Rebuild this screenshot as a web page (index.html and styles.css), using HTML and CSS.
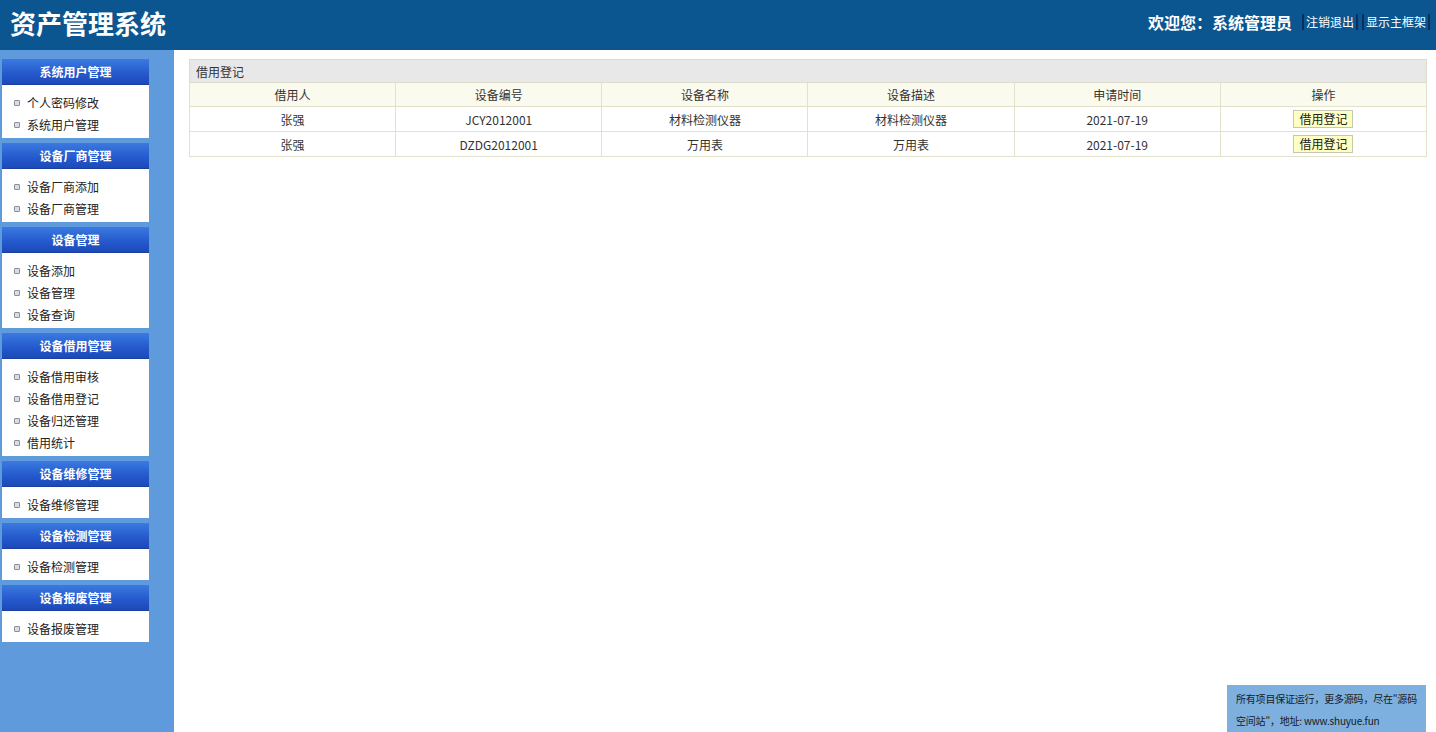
FILE: index.html
```html
<!DOCTYPE html>
<html lang="zh-CN">
<head>
  <meta charset="UTF-8" />
  <title>资产管理系统</title>
  <link rel="stylesheet" href="styles.css">
</head>
<body>
  <div class="top">
    <div class="logo">资产管理系统</div>
    <div class="welcome">
      <span class="who">欢迎您：系统管理员</span>
      <a class="toplink" href="#">注销退出</a>
      <a class="toplink" href="#">显示主框架</a>
    </div>
  </div>

  <div class="wrap">
    <div class="left">
      <div class="menu">
        <div class="menu-title">系统用户管理</div>
        <ul>
          <li>个人密码修改</li>
          <li>系统用户管理</li>
        </ul>
      </div>
      <div class="menu">
        <div class="menu-title">设备厂商管理</div>
        <ul>
          <li>设备厂商添加</li>
          <li>设备厂商管理</li>
        </ul>
      </div>
      <div class="menu">
        <div class="menu-title">设备管理</div>
        <ul>
          <li>设备添加</li>
          <li>设备管理</li>
          <li>设备查询</li>
        </ul>
      </div>
      <div class="menu">
        <div class="menu-title">设备借用管理</div>
        <ul>
          <li>设备借用审核</li>
          <li>设备借用登记</li>
          <li>设备归还管理</li>
          <li>借用统计</li>
        </ul>
      </div>
      <div class="menu">
        <div class="menu-title">设备维修管理</div>
        <ul>
          <li>设备维修管理</li>
        </ul>
      </div>
      <div class="menu">
        <div class="menu-title">设备检测管理</div>
        <ul>
          <li>设备检测管理</li>
        </ul>
      </div>
      <div class="menu">
        <div class="menu-title">设备报废管理</div>
        <ul>
          <li>设备报废管理</li>
        </ul>
      </div>
    </div>

    <div class="main">
      <table class="list">
        <tr><td class="caption" colspan="6">借用登记</td></tr>
        <tr class="head">
          <td>借用人</td>
          <td>设备编号</td>
          <td>设备名称</td>
          <td>设备描述</td>
          <td>申请时间</td>
          <td>操作</td>
        </tr>
        <tr>
          <td>张强</td>
          <td>JCY2012001</td>
          <td>材料检测仪器</td>
          <td>材料检测仪器</td>
          <td>2021-07-19</td>
          <td><button class="btn">借用登记</button></td>
        </tr>
        <tr>
          <td>张强</td>
          <td>DZDG2012001</td>
          <td>万用表</td>
          <td>万用表</td>
          <td>2021-07-19</td>
          <td><button class="btn">借用登记</button></td>
        </tr>
      </table>
    </div>
  </div>

  <div class="notice">所有项目保证运行，更多源码，尽在"源码空间站"，地址: www.shuyue.fun</div>
</body>
</html>
```

FILE: styles.css
```css
body {
  margin: 0;
  font-family: "Noto Sans CJK SC", "Noto Sans", sans-serif;
  font-size: 12px;
  color: #222;
  background: #fff;
  height: 732px;
  overflow: hidden;
}
.top {
  height: 50px;
  background: #0b5591;
  display: flex;
  align-items: center;
  justify-content: space-between;
  padding: 0 6px 0 10px;
  color: #fff;
}
.logo {
  font-size: 26px;
  font-weight: bold;
  margin-top: -6px;
}
.welcome {
  display: flex;
  align-items: center;
  margin-top: -6px;
}
.who {
  font-size: 16px;
  font-weight: bold;
  margin-right: 6px;
}
.toplink {
  color: #fff;
  text-decoration: none;
  font-size: 12px;
  border-left: 2px solid #0a2f5c;
  border-right: 2px solid #0a2f5c;
  padding: 0 2px;
  margin-left: 4px;
  line-height: 16px;
}
.wrap {
  display: flex;
  height: 682px;
}
.left {
  width: 174px;
  background: #5f9bdc;
  padding-top: 9px;
  box-sizing: border-box;
}
.menu {
  width: 147px;
  margin: 0 0 5px 2px;
  background: #fff;
}
.menu-title {
  height: 26px;
  line-height: 26px;
  text-align: center;
  color: #fff;
  font-weight: bold;
  font-size: 12px;
  background: linear-gradient(#3b7ae0, #2458cc 60%, #1c49b8);
  border-bottom: 1px solid #1a3f9c;
  box-sizing: border-box;
}
.menu ul {
  list-style: none;
  margin: 0;
  padding: 7px 0 2px 12px;
}
.menu li {
  height: 22px;
  line-height: 22px;
  font-size: 12px;
  color: #222;
  display: flex;
  align-items: center;
}
.menu li::before {
  content: "";
  width: 4px;
  height: 4px;
  border: 1px solid #8a8f99;
  border-radius: 1px;
  background: #d8dce4;
  margin-right: 7px;
}
.main {
  flex: 1;
  padding: 9px 9px 0 15px;
}
.list {
  width: 100%;
  border-collapse: collapse;
  table-layout: fixed;
}
.list td {
  border: 1px solid #e2e2cc;
  text-align: center;
  height: 24px;
  padding: 0;
  font-size: 12px;
  color: #333;
}
.list td.caption {
  text-align: left;
  background: #e8e8e8;
  padding-left: 6px;
  height: 22px;
  border-color: #dcdccc;
}
.list .head td {
  background: #fafaee;
  height: 23px;
}
.btn {
  font-family: inherit;
  font-size: 12px;
  color: #222;
  background: #ffffc4;
  border: 1px solid #c8c8b0;
  height: 18px;
  padding: 0 5px;
  line-height: 16px;
}
.notice {
  position: fixed;
  right: 10px;
  bottom: 0;
  width: 199px;
  height: 47px;
  box-sizing: border-box;
  background: #7db0de;
  padding: 3px 2px 0 9px;
  font-size: 10px;
  line-height: 22px;
  letter-spacing: -0.2px;
  color: #1a1a1a;
}
```
